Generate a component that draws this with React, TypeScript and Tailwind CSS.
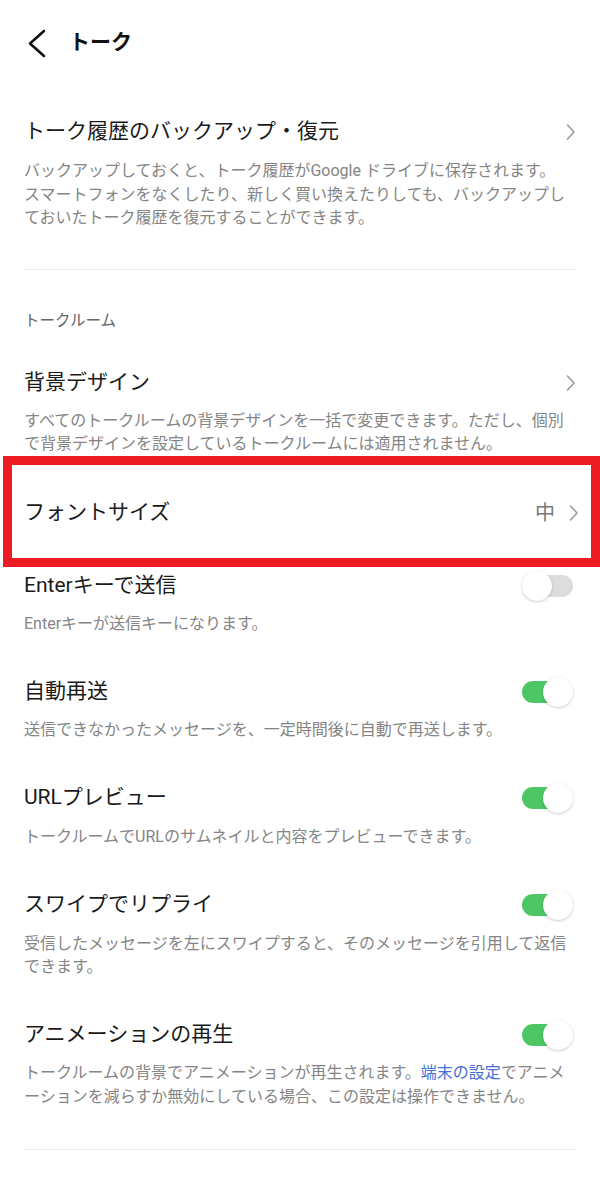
import React from 'react';

const font = { fontFamily: "Roboto, 'Noto Sans CJK JP', sans-serif" };

function Chevron() {
  return (
    <svg width="10" height="18" viewBox="0 0 10 18" className="shrink-0">
      <polyline points="1.5,2 8,9 1.5,16" fill="none" stroke="#9a9a9a" strokeWidth="1.6" strokeLinecap="round" strokeLinejoin="round" />
    </svg>
  );
}

function Toggle({ on }: { on: boolean }) {
  return (
    <div className="relative w-[51px] h-[30px] shrink-0 mr-[3px]">
      {on ? (
        <>
          <div className="absolute left-0 top-[4px] w-[46px] h-[22px] rounded-full bg-[#4cc764]" />
          <div className="absolute right-0 top-0 w-[30px] h-[30px] rounded-full bg-white shadow-[0_1px_3px_rgba(0,0,0,0.2)]" />
        </>
      ) : (
        <>
          <div className="absolute right-0 top-[4px] w-[46px] h-[22px] rounded-full bg-[#dddddd]" />
          <div className="absolute left-0 top-0 w-[30px] h-[30px] rounded-full bg-white shadow-[0_1px_3px_rgba(0,0,0,0.2)]" />
        </>
      )}
    </div>
  );
}

function ToggleItem({
  title,
  on,
  className,
  children,
}: {
  title: string;
  on: boolean;
  className: string;
  children: React.ReactNode;
}) {
  return (
    <div className={className}>
      <div className="flex items-center justify-between h-[30px]">
        <span className="text-[21px] text-[#1a1a1a]">{title}</span>
        <Toggle on={on} />
      </div>
      <p className="mt-[11.5px] text-[16px] leading-[23.5px] text-[#858585]">{children}</p>
    </div>
  );
}

export default function App() {
  return (
    <div className="w-[600px] min-h-[1180px] bg-white" style={font}>
      {/* Header */}
      <header className="flex items-center h-[86px] pl-[27px]">
        <svg width="20" height="30" viewBox="0 0 20 30">
          <polyline points="17,3 3,15.5 17,28" fill="none" stroke="#111" strokeWidth="2.6" strokeLinecap="round" strokeLinejoin="round" />
        </svg>
        <h1 className="ml-[22px] text-[21px] font-bold text-[#111]">トーク</h1>
      </header>

      <div className="px-6">
        {/* Backup */}
        <div className="pt-[31px]">
          <div className="flex items-center justify-between h-[30px]">
            <span className="text-[21px] text-[#1a1a1a]">トーク履歴のバックアップ・復元</span>
            <Chevron />
          </div>
          <p className="mt-[12px] text-[16px] leading-[23.5px] text-[#858585]">
            バックアップしておくと、トーク履歴がGoogle ドライブに保存されます。
            <br />
            スマートフォンをなくしたり、新しく買い換えたりしても、バックアップしておいたトーク履歴を復元することができます。
          </p>
        </div>

        <div className="mt-[39px] h-px bg-[#ececec]" />

        <div className="mt-[41px] text-[15.5px] leading-[20px] text-[#666]">トークルーム</div>

        {/* Background */}
        <div className="mt-[37px]">
          <div className="flex items-center justify-between h-[30px]">
            <span className="text-[21px] text-[#1a1a1a]">背景デザイン</span>
            <Chevron />
          </div>
          <p className="mt-[11px] text-[16px] leading-[23.5px] text-[#858585]">
            すべてのトークルームの背景デザインを一括で変更できます。ただし、個別で背景デザインを設定しているトークルームには適用されません。
          </p>
        </div>
      </div>

      {/* Highlighted font size row */}
      <div className="ml-[3px] h-[111px] border-[9px] border-[#ed1c24] flex items-center justify-between pl-[12px] pr-[12px] pt-[4px]">
        <span className="text-[21px] text-[#1a1a1a]">フォントサイズ</span>
        <div className="flex items-center gap-[14px]">
          <span className="text-[20px] text-[#777]">中</span>
          <Chevron />
        </div>
      </div>

      <div className="px-6">
        <ToggleItem title="Enterキーで送信" on={false} className="mt-[4px]">
          Enterキーが送信キーになります。
        </ToggleItem>
        <ToggleItem title="自動再送" on={true} className="mt-[41px]">
          送信できなかったメッセージを、一定時間後に自動で再送します。
        </ToggleItem>
        <ToggleItem title="URLプレビュー" on={true} className="mt-[41.5px]">
          トークルームでURLのサムネイルと内容をプレビューできます。
        </ToggleItem>
        <ToggleItem title="スワイプでリプライ" on={true} className="mt-[42px]">
          受信したメッセージを左にスワイプすると、そのメッセージを引用して返信できます。
        </ToggleItem>
        <ToggleItem title="アニメーションの再生" on={true} className="mt-[41px]">
          トークルームの背景でアニメーションが再生されます。
          <span className="text-[#4270d6]">端末の設定</span>
          でアニメ
          <br />
          ーションを減らすか無効にしている場合、この設定は操作できません。
        </ToggleItem>

        <div className="mt-[41px] h-px bg-[#ececec]" />
      </div>
    </div>
  );
}
